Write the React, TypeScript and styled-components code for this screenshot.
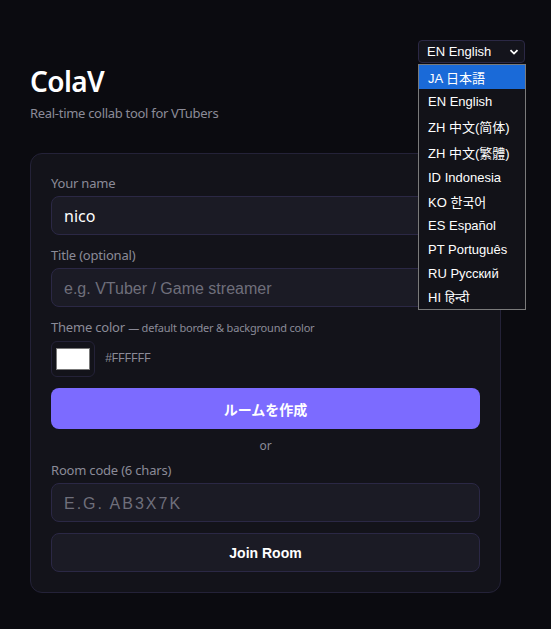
import React, { useState } from "react"
import styled, { createGlobalStyle, css } from "styled-components"

const GlobalStyle = createGlobalStyle`
	html, body {
		margin: 0;
		padding: 0;
		background: #0b0b10;
	}
	body {
		font-family: "Noto Sans", "Noto Sans CJK JP", sans-serif;
		color: #e8e8f0;
	}
	* {
		box-sizing: border-box;
	}
`

const sans = `"Liberation Sans", Arial, "Noto Sans CJK JP", sans-serif`

const StyledPage = styled.div`
	position: relative;
	width: 551px;
	min-height: 629px;
	padding: 64px 50px 36px 30px;
`

const StyledTitle = styled.h1`
	margin: 0;
	font-size: 28px;
	line-height: 34px;
	font-weight: 600;
	letter-spacing: -0.6px;
	color: #ffffff;
`

const StyledSubtitle = styled.p`
	margin: 6px 0 0;
	font-size: 13px;
	line-height: 18px;
	letter-spacing: -0.3px;
	color: #8b8b98;
`

const StyledCard = styled.div`
	margin-top: 31px;
	width: 471px;
	background: #13131a;
	border: 1px solid #242238;
	border-radius: 12px;
	padding: 20px;
	display: flex;
	flex-direction: column;
	gap: 11px;
`

const StyledField = styled.div`
	display: flex;
	flex-direction: column;
	gap: 4px;
`

const StyledLabel = styled.label`
	font-size: 13px;
	line-height: 18px;
	letter-spacing: -0.2px;
	color: #8b8b98;
`

const StyledHint = styled.span`
	font-size: 11px;
`

const StyledInput = styled.input<{ code? }>`
	height: 39px;
	width: 100%;
	background: #1b1b25;
	border: 1px solid #2b2845;
	border-radius: 8px;
	padding: 0 12px;
	font-size: 16px;
	font-family: "Noto Sans", sans-serif;
	color: #ffffff;
	outline: none;

	&::placeholder {
		font-family: ${sans};
		color: #6f6f7b;
	}

	${({ code }) =>
		code &&
		css`
			&::placeholder {
				text-transform: uppercase;
				letter-spacing: 2px;
			}
		`}
`

const StyledColorRow = styled.div`
	display: flex;
	align-items: center;
	gap: 10px;
`

const StyledSwatch = styled.div`
	width: 44px;
	height: 36px;
	border: 1px solid #242238;
	border-radius: 6px;
	background: #13131a;
	display: flex;
	align-items: center;
	justify-content: center;
`

const StyledSwatchFill = styled.div<{ color }>`
	width: 34px;
	height: 22px;
	background: ${({ color }) => color};
	border: 1px solid #777777;
`

const StyledHex = styled.span`
	font-family: "Liberation Mono", "DejaVu Sans Mono", monospace;
	font-size: 12px;
	letter-spacing: -0.7px;
	color: #8b8b98;
`

const StyledButton = styled.button<{ primary? }>`
	height: 39px;
	width: 100%;
	border-radius: 8px;
	border: 1px solid #2b2845;
	background: #1b1b25;
	color: #ffffff;
	font-family: ${sans};
	font-size: 14px;
	font-weight: 700;
	cursor: pointer;

	${({ primary }) =>
		primary &&
		css`
			height: 41px;
			border: none;
			background: #7c6bff;
			font-family: "Noto Sans CJK JP", sans-serif;
		`}
`

const StyledOr = styled.div`
	text-align: center;
	font-size: 12px;
	line-height: 14px;
	margin: -1px 0 -3px;
	color: #8b8b98;
`

const StyledLang = styled.div`
	position: absolute;
	top: 40px;
	left: 418px;
	width: 108px;
	font-family: ${sans};
	font-size: 13px;
`

const StyledSelect = styled.div`
	width: 107px;
	height: 23px;
	background: #14141c;
	border: 1px solid #2b2845;
	border-radius: 4px;
	display: flex;
	align-items: center;
	justify-content: space-between;
	padding: 0 5px 0 8px;
	color: #ffffff;
`

const StyledList = styled.ul`
	list-style: none;
	margin: 1px 0 0;
	padding: 0;
	background: #121218;
	border: 1px solid #7a7a7a;
`

const StyledOption = styled.li<{ active?; tall? }>`
	height: ${({ tall }) => (tall ? "26px" : "24px")};
	display: flex;
	align-items: center;
	padding: 0 9px;
	color: #ffffff;
	font-family: ${sans};
	white-space: nowrap;

	${({ active }) =>
		active &&
		css`
			background: #1a6ad8;
		`}
`

const langs = [
	{ code: "JA", name: "日本語" },
	{ code: "EN", name: "English" },
	{ code: "ZH", name: "中文(简体)", tall: true, font: "Noto Sans CJK SC" },
	{ code: "ZH", name: "中文(繁體)", tall: true, font: "Noto Sans CJK TC" },
	{ code: "ID", name: "Indonesia" },
	{ code: "KO", name: "한국어", font: "Noto Sans CJK KR" },
	{ code: "ES", name: "Español" },
	{ code: "PT", name: "Português" },
	{ code: "RU", name: "Русский" },
	{ code: "HI", name: "हिन्दी" },
]

const Chevron = () => (
	<svg width="10" height="10" viewBox="0 0 10 10">
		<path d="M1.5 3.2 L5 6.6 L8.5 3.2" fill="none" stroke="#ffffff" strokeWidth="1.8" />
	</svg>
)

const App = () => {
	const [name, setName] = useState("nico")

	return (
		<StyledPage>
			<GlobalStyle />
			<StyledTitle>ColaV</StyledTitle>
			<StyledSubtitle>Real-time collab tool for VTubers</StyledSubtitle>

			<StyledCard>
				<StyledField>
					<StyledLabel>Your name</StyledLabel>
					<StyledInput value={name} onChange={(e) => setName(e.target.value)} />
				</StyledField>
				<StyledField>
					<StyledLabel>Title (optional)</StyledLabel>
					<StyledInput placeholder="e.g. VTuber / Game streamer" />
				</StyledField>
				<StyledField>
					<StyledLabel>
						Theme color <StyledHint>— default border &amp; background color</StyledHint>
					</StyledLabel>
					<StyledColorRow>
						<StyledSwatch>
							<StyledSwatchFill color="#ffffff" />
						</StyledSwatch>
						<StyledHex>#FFFFFF</StyledHex>
					</StyledColorRow>
				</StyledField>
				<StyledButton primary>ルームを作成</StyledButton>
				<StyledOr>or</StyledOr>
				<StyledField>
					<StyledLabel>Room code (6 chars)</StyledLabel>
					<StyledInput code placeholder="e.g. AB3X7K" />
				</StyledField>
				<StyledButton>Join Room</StyledButton>
			</StyledCard>

			<StyledLang>
				<StyledSelect>
					<span>EN English</span>
					<Chevron />
				</StyledSelect>
				<StyledList>
					{langs.map((l, i) => (
						<StyledOption key={i} active={i === 0} tall={l.tall}>
							<span style={l.font ? { fontFamily: `"Liberation Sans", "${l.font}", sans-serif` } : undefined}>
								{l.code} {l.name}
							</span>
						</StyledOption>
					))}
				</StyledList>
			</StyledLang>
		</StyledPage>
	)
}

export default App
